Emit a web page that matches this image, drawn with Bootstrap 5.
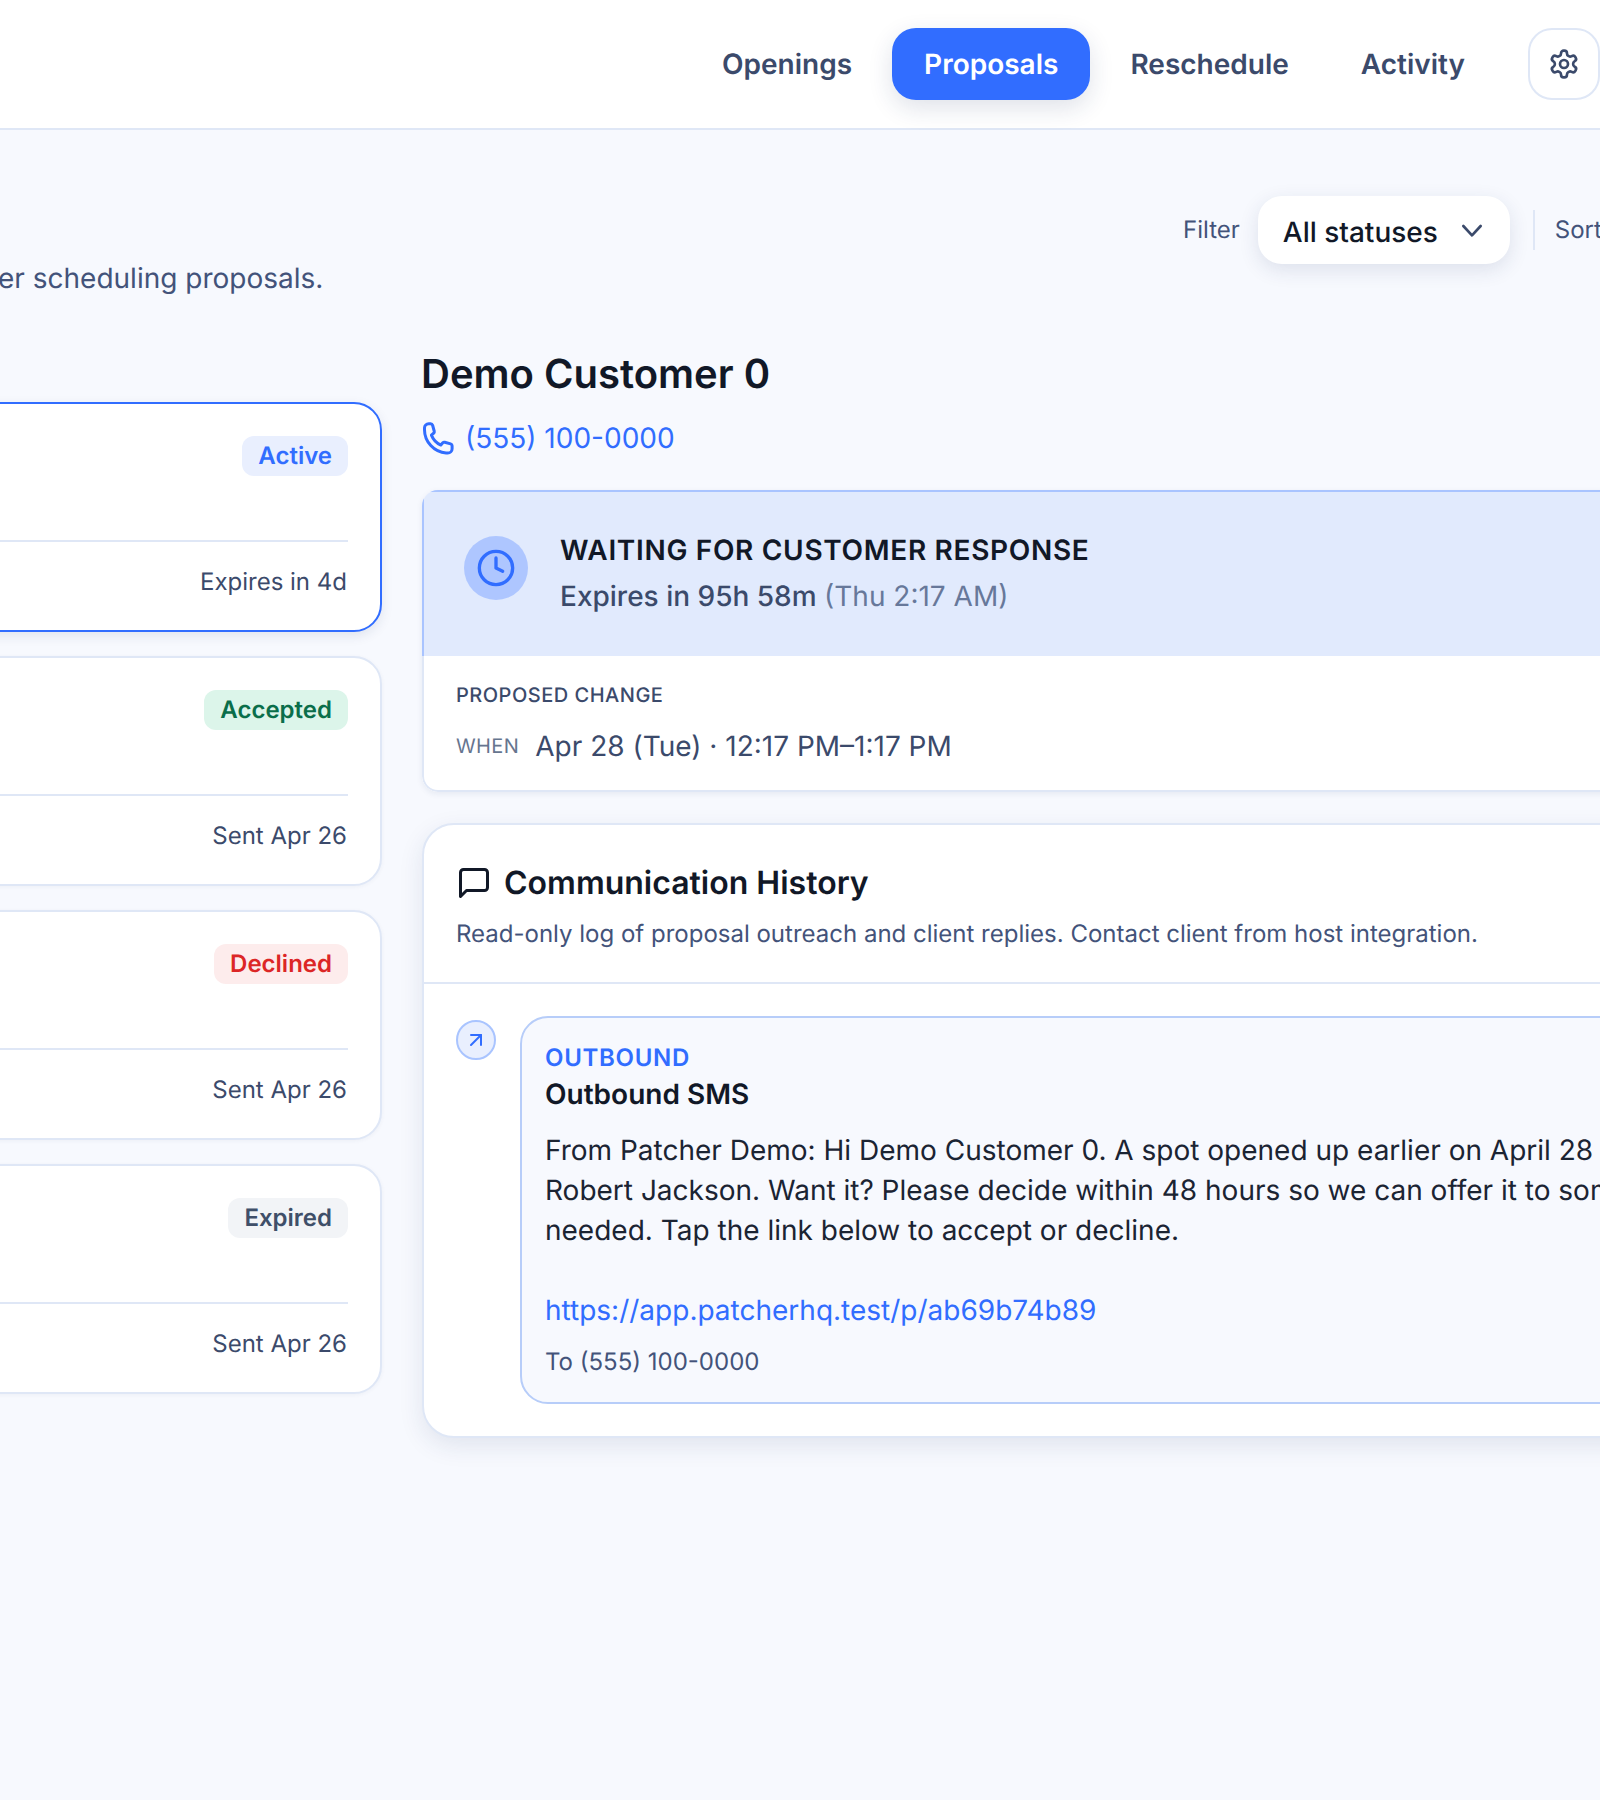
<!doctype html>
<html lang="en">
<head>
  <meta charset="utf-8">
  <meta name="viewport" content="width=device-width, initial-scale=1">
  <title>Proposals</title>
  <link href="https://cdn.jsdelivr.net/npm/bootstrap@5.3.3/dist/css/bootstrap.min.css" rel="stylesheet">
  <style>
    html, body { overflow-x: hidden; }
    body {
      font-family: "Inter", "Liberation Sans", sans-serif;
      text-rendering: geometricPrecision;
      background-color: #f7f9fe;
      color: #111827;
      min-height: 1800px;
    }

    /* Top bar */
    .top-bar {
      height: 130px;
      background: #fff;
      border-bottom: 2px solid #dfe7f6;
      padding-top: 28px;
    }
    .top-link {
      display: block;
      height: 72px;
      line-height: 72px;
      padding: 0 32px;
      border-radius: 24px;
      font-size: 28px;
      font-weight: 600;
      color: #3b4a6b;
      text-decoration: none;
    }
    .top-link.is-active {
      background: #316dff;
      color: #fff;
      box-shadow: 0 8px 24px rgba(30, 50, 100, .14);
    }
    .gear-btn {
      width: 72px;
      height: 72px;
      margin-left: 23px;
      border: 2px solid #dfe7f6;
      border-radius: 24px;
      background: #fff;
      color: #3b4a6b;
      padding: 0;
    }

    /* Page head */
    .page-head { height: 215px; padding-top: 66px; }
    .head-sub {
      margin: 62px 0 0 -2px;
      font-size: 28px;
      line-height: 40px;
      color: #43537a;
      white-space: nowrap;
    }
    .tool-label { font-size: 24px; color: #43537a; }
    .status-select {
      width: 252px;
      height: 68px;
      margin: 0 23px 0 18px;
      padding: 4px 22px 0 25px;
      background: #fff;
      border-radius: 24px;
      box-shadow: 0 6px 20px rgba(30, 50, 100, .12);
      font-size: 28px;
      font-weight: 500;
      color: #111827;
    }
    .status-select svg { margin-top: -4px; }
    .tool-split { width: 2px; height: 40px; background: #dfe7f6; margin-right: 20px; }
    .tool-row { margin-right: -1px; width: 418px; }

    /* Proposal list */
    .list-col { flex: 0 0 382px; padding-top: 57px; }
    .prop-item {
      width: 422px;
      height: 230px;
      margin: 0 0 24px -40px;
      padding: 32px 32px 0;
      background: #fff;
      border: 2px solid #dfe7f6;
      border-radius: 28px;
      box-shadow: 0 1px 4px rgba(30, 50, 100, .05);
    }
    .prop-item.is-current { border-color: #316dff; box-shadow: 0 4px 12px rgba(30, 50, 100, .1); }
    .state-tag {
      height: 40px;
      line-height: 40px;
      padding: 0 16px;
      border-radius: 12px;
      font-size: 24px;
      font-weight: 600;
    }
    .tag-active { background: #e9effe; color: #316dff; }
    .tag-accepted { background: #dcf5ea; color: #0a6e4a; }
    .tag-declined { background: #fdecec; color: #dc2626; }
    .tag-expired { background: #f2f4f7; color: #3f4f69; }
    .prop-top { height: 106px; border-bottom: 2px solid #dfe7f6; }
    .prop-foot {
      padding: 20px 1px 0 0;
      font-size: 24px;
      line-height: 40px;
      color: #3b4a6b;
      text-align: right;
    }

    /* Detail */
    .detail-col { flex: 0 0 1300px; margin-left: 40px; padding-top: 1px; }
    .cust-name { font-size: 40px; font-weight: 600; line-height: 56px; margin: 0 0 16px -1px; }
    .cust-phone { height: 40px; font-size: 28px; line-height: 40px; color: #316dff; text-decoration: none; gap: 9px; }
    .cust-phone svg { margin-left: -2px; }
    .status-box {
      margin-top: 32px;
      background: #fff;
      border-radius: 16px;
      box-shadow: 0 2px 6px rgba(30, 50, 100, .08);
      overflow: hidden;
    }
    .status-head {
      height: 166px;
      padding: 44px 40px 0;
      background: #e1eafd;
      border: 2px solid #a9c4ff;
      border-width: 2px 0 0 2px;
      gap: 32px;
    }
    .clock-dot {
      flex: none;
      width: 64px;
      height: 64px;
      border-radius: 50%;
      background: #aec6ff;
      color: #316dff;
    }
    .status-text { margin-top: -6px; }
    .status-title {
      font-size: 28px;
      font-weight: 600;
      line-height: 40px;
      letter-spacing: .68px;
      text-transform: uppercase;
    }
    .status-note { margin-top: 6px; font-size: 28px; line-height: 40px; font-weight: 500; color: #3b4a6b; }
    .status-note span { font-weight: 400; color: #67789a; }
    .change-area {
      height: 136px;
      padding: 23px 32px 0;
      border: 2px solid #dfe7f6;
      border-top: 0;
      border-radius: 0 0 16px 16px;
    }
    .change-label {
      font-size: 20px;
      font-weight: 500;
      line-height: 32px;
      letter-spacing: .5px;
      color: #3b4a6b;
      text-transform: uppercase;
    }
    .when-row { margin-top: 15px; gap: 16px; }
    .when-label { font-size: 20px; color: #66758f; letter-spacing: .4px; }
    .when-value { font-size: 28px; line-height: 40px; color: #3b4a6b; }

    .history-box {
      margin-top: 31px;
      height: 615px;
      background: #fff;
      border: 2px solid #dfe7f6;
      border-radius: 32px;
      box-shadow: 0 8px 24px rgba(30, 50, 100, .1);
    }
    .history-head { height: 159px; padding: 36px 32px 0; border-bottom: 2px solid #dfe7f6; }
    .history-title { font-size: 32px; font-weight: 600; line-height: 44px; gap: 12px; margin: 0; }
    .history-sub { margin: 11px 0 0; font-size: 24px; line-height: 36px; color: #43537a; white-space: nowrap; }
    .history-body { padding: 32px 32px 0; gap: 24px; }
    .dir-dot {
      flex: none;
      width: 40px;
      height: 40px;
      margin-top: 4px;
      border: 2px solid #a9c4ff;
      border-radius: 50%;
      background: #e9effe;
      color: #316dff;
    }
    .msg-bubble {
      flex: 1;
      height: 388px;
      padding: 24px 24px 24px 23px;
      background: #f7f9fe;
      border: 2px solid #b7cdf9;
      border-radius: 28px;
    }
    .msg-dir { font-size: 24px; font-weight: 600; line-height: 32px; letter-spacing: .7px; color: #316dff; }
    .msg-title { font-size: 28px; font-weight: 600; line-height: 40px; }
    .msg-text { margin: 16px 0 0; font-size: 28px; line-height: 40px; color: #1b2433; white-space: nowrap; }
    .msg-link { display: block; margin-top: 40px; font-size: 28px; line-height: 40px; color: #316dff; text-decoration: none; }
    .msg-to { margin-top: 12px; font-size: 24px; line-height: 40px; color: #43537a; }
  </style>
</head>
<body>
  <header class="top-bar">
    <nav class="d-flex justify-content-end gap-2">
      <a class="top-link" href="#">Openings</a>
      <a class="top-link is-active" href="#">Proposals</a>
      <a class="top-link" href="#">Reschedule</a>
      <a class="top-link" href="#">Activity</a>
      <button class="gear-btn d-flex align-items-center justify-content-center" type="button" aria-label="Settings">
        <svg width="32" height="32" viewBox="0 0 24 24" fill="none" stroke="currentColor" stroke-width="2" stroke-linecap="round" stroke-linejoin="round"><path d="M12.22 2h-.44a2 2 0 0 0-2 2v.18a2 2 0 0 1-1 1.73l-.43.25a2 2 0 0 1-2 0l-.15-.08a2 2 0 0 0-2.73.73l-.22.38a2 2 0 0 0 .73 2.73l.15.1a2 2 0 0 1 1 1.72v.51a2 2 0 0 1-1 1.74l-.15.09a2 2 0 0 0-.73 2.73l.22.38a2 2 0 0 0 2.73.73l.15-.08a2 2 0 0 1 2 0l.43.25a2 2 0 0 1 1 1.73V20a2 2 0 0 0 2 2h.44a2 2 0 0 0 2-2v-.18a2 2 0 0 1 1-1.73l.43-.25a2 2 0 0 1 2 0l.15.08a2 2 0 0 0 2.73-.73l.22-.39a2 2 0 0 0-.73-2.73l-.15-.08a2 2 0 0 1-1-1.74v-.5a2 2 0 0 1 1-1.74l.15-.09a2 2 0 0 0 .73-2.73l-.22-.38a2 2 0 0 0-2.73-.73l-.15.08a2 2 0 0 1-2 0l-.43-.25a2 2 0 0 1-1-1.73V4a2 2 0 0 0-2-2z"/><circle cx="12" cy="12" r="3"/></svg>
      </button>
    </nav>
  </header>

  <section class="page-head d-flex justify-content-between align-items-start">
    <p class="head-sub">er scheduling proposals.</p>
    <div class="tool-row d-flex align-items-center flex-shrink-0">
      <span class="tool-label">Filter</span>
      <div class="status-select d-flex align-items-center justify-content-between flex-shrink-0">
        <span>All statuses</span>
        <svg width="32" height="32" viewBox="0 0 24 24" fill="none" stroke="#3b4a6b" stroke-width="2" stroke-linecap="round" stroke-linejoin="round"><path d="m5.500 9 6.500 7 6.500-7"/></svg>
      </div>
      <span class="tool-split flex-shrink-0"></span>
      <span class="tool-label">Sort</span>
    </div>
  </section>

  <main class="d-flex align-items-start">
    <div class="list-col">
      <div class="prop-item is-current">
        <div class="prop-top d-flex justify-content-end align-items-start"><span class="state-tag tag-active">Active</span></div>
        <div class="prop-foot">Expires in 4d</div>
      </div>
      <div class="prop-item">
        <div class="prop-top d-flex justify-content-end align-items-start"><span class="state-tag tag-accepted">Accepted</span></div>
        <div class="prop-foot">Sent Apr 26</div>
      </div>
      <div class="prop-item">
        <div class="prop-top d-flex justify-content-end align-items-start"><span class="state-tag tag-declined">Declined</span></div>
        <div class="prop-foot">Sent Apr 26</div>
      </div>
      <div class="prop-item">
        <div class="prop-top d-flex justify-content-end align-items-start"><span class="state-tag tag-expired">Expired</span></div>
        <div class="prop-foot">Sent Apr 26</div>
      </div>
    </div>

    <div class="detail-col">
      <h1 class="cust-name">Demo Customer 0</h1>
      <a class="cust-phone d-flex align-items-center" href="#">
        <svg width="36" height="36" viewBox="0 0 24 24" fill="none" stroke="currentColor" stroke-width="2" stroke-linecap="round" stroke-linejoin="round"><path d="M3 5.300C3 3.700 4.200 2.500 5.800 2.500h1.300c.6 0 1.100.4 1.300 1l1.100 4c.1.5 0 1-.4 1.300L7.600 10.100c1.300 3.200 3.400 5.400 6.300 6.600l1.300-1.500c.3-.4.800-.5 1.300-.4l3.900 1.100c.6.200 1 .7 1 1.300v1.900c0 1.600-1.300 2.900-2.900 2.900h-1.100C9.400 21.500 3 14.500 3 6.500z"/></svg>
        (555) 100-0000
      </a>

      <section class="status-box">
        <div class="status-head d-flex align-items-start">
          <div class="clock-dot d-flex align-items-center justify-content-center">
            <svg width="40" height="40" viewBox="0 0 24 24" fill="none" stroke="currentColor" stroke-width="2" stroke-linecap="round" stroke-linejoin="round"><circle cx="12" cy="12" r="10"/><path d="M12 6v6l4 2"/></svg>
          </div>
          <div class="status-text">
            <div class="status-title">Waiting for customer response</div>
            <div class="status-note">Expires in 95h 58m <span>(Thu 2:17 AM)</span></div>
          </div>
        </div>
        <div class="change-area">
          <div class="change-label">Proposed change</div>
          <div class="when-row d-flex align-items-center">
            <span class="when-label">WHEN</span>
            <span class="when-value">Apr 28 (Tue) · 12:17 PM–1:17 PM</span>
          </div>
        </div>
      </section>

      <section class="history-box">
        <div class="history-head">
          <h2 class="history-title d-flex align-items-center">
            <svg width="36" height="36" viewBox="0 0 24 24" fill="none" stroke="currentColor" stroke-width="2" stroke-linecap="round" stroke-linejoin="round"><path d="M21 15a2 2 0 0 1-2 2H7l-4 4V5a2 2 0 0 1 2-2h14a2 2 0 0 1 2 2z"/></svg>
            Communication History
          </h2>
          <p class="history-sub">Read-only log of proposal outreach and client replies. Contact client from host integration.</p>
        </div>
        <div class="history-body d-flex align-items-start">
          <div class="dir-dot d-flex align-items-center justify-content-center">
            <svg width="24" height="24" viewBox="0 0 24 24" fill="none" stroke="currentColor" stroke-width="2" stroke-linecap="round" stroke-linejoin="round"><path d="M7 7h10v10"/><path d="M7 17 17 7"/></svg>
          </div>
          <article class="msg-bubble">
            <div class="msg-dir">OUTBOUND</div>
            <div class="msg-title">Outbound SMS</div>
            <p class="msg-text">From Patcher Demo: Hi Demo Customer 0. A spot opened up earlier on April 28<br>Robert Jackson. Want it? Please decide within 48 hours so we can offer it to someone<br>needed. Tap the link below to accept or decline.</p>
            <a class="msg-link" href="#">https://app.patcherhq.test/p/ab69b74b89</a>
            <div class="msg-to">To (555) 100-0000</div>
          </article>
        </div>
      </section>
    </div>
  </main>

  <script src="https://cdn.jsdelivr.net/npm/bootstrap@5.3.3/dist/js/bootstrap.bundle.min.js"></script>
</body>
</html>
